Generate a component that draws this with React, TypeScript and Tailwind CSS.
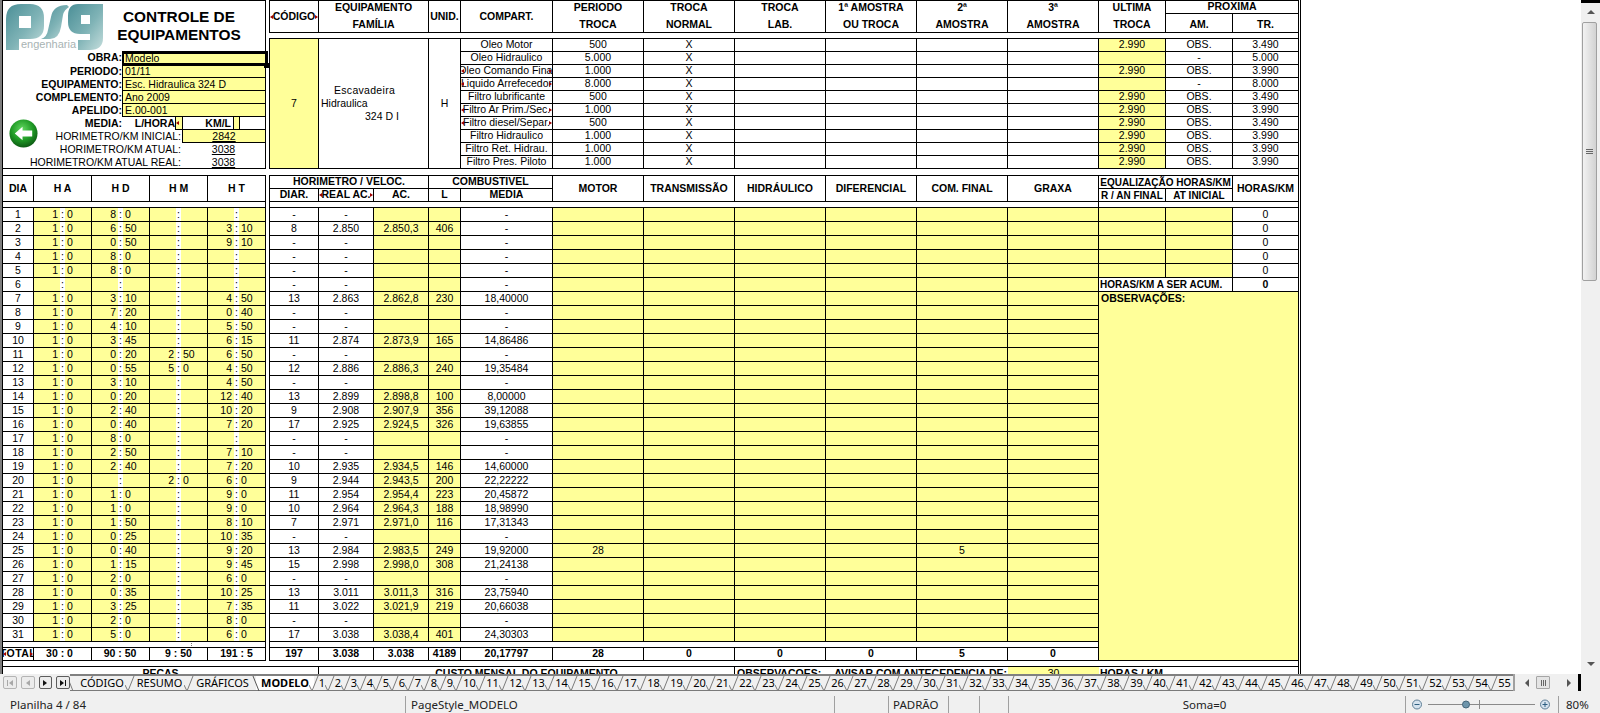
import type { ReactNode } from 'react';

const YELLOW = 'bg-[#ffff99]';
const CELL = 'relative flex items-center justify-center overflow-hidden whitespace-nowrap border-r border-b border-black';

// hd|hm|ht|diar|real|ac|l|media, one line per day
const DAYS = [
  '8:0||||||| ',
  '6:50||3:10|8|2.850|2.850,3|406|',
  '0:50||9:10|||||',
  '8:0|||||||',
  '8:0|||||||',
  '|||||||',
  '3:10||4:50|13|2.863|2.862,8|230|18,40000',
  '7:20||0:40|||||',
  '4:10||5:50|||||',
  '3:45||6:15|11|2.874|2.873,9|165|14,86486',
  '0:20|2:50|6:50|||||',
  '0:55|5:0|4:50|12|2.886|2.886,3|240|19,35484',
  '3:10||4:50|||||',
  '0:20||12:40|13|2.899|2.898,8|100|8,00000',
  '2:40||10:20|9|2.908|2.907,9|356|39,12088',
  '0:40||7:20|17|2.925|2.924,5|326|19,63855',
  '8:0|||||||',
  '2:50||7:10|||||',
  '2:40||7:20|10|2.935|2.934,5|146|14,60000',
  '|2:0|6:0|9|2.944|2.943,5|200|22,22222',
  '1:0||9:0|11|2.954|2.954,4|223|20,45872',
  '1:0||9:0|10|2.964|2.964,3|188|18,98990',
  '1:50||8:10|7|2.971|2.971,0|116|17,31343',
  '0:25||10:35|||||',
  '0:40||9:20|13|2.984|2.983,5|249|19,92000',
  '1:15||9:45|15|2.998|2.998,0|308|21,24138',
  '2:0||6:0|||||',
  '0:35||10:25|13|3.011|3.011,3|316|23,75940',
  '3:25||7:35|11|3.022|3.021,9|219|20,66038',
  '2:0||8:0|||||',
  '5:0||6:0|17|3.038|3.038,4|401|24,30303',
].map((line) => line.split('|').map((part) => part.trim()));

const PARTS = [
  { name: 'Oleo Motor', period: '500', last: '2.990', am: 'OBS.', tr: '3.490' },
  { name: 'Oleo Hidraulico', period: '5.000', last: '', am: '-', tr: '5.000' },
  { name: 'Oleo Comando Final', clip: true, period: '1.000', last: '2.990', am: 'OBS.', tr: '3.990' },
  { name: 'Liquido Arrefecedor', clip: true, period: '8.000', last: '', am: '-', tr: '8.000' },
  { name: 'Filtro lubrificante', period: '500', last: '2.990', am: 'OBS.', tr: '3.490' },
  { name: 'Filtro Ar Prim./Sec.', clip: true, period: '1.000', last: '2.990', am: 'OBS.', tr: '3.990' },
  { name: 'Filtro diesel/Separ.', clip: true, period: '500', last: '2.990', am: 'OBS.', tr: '3.490' },
  { name: 'Filtro Hidraulico', period: '1.000', last: '2.990', am: 'OBS.', tr: '3.990' },
  { name: 'Filtro Ret. Hidrau.', period: '1.000', last: '2.990', am: 'OBS.', tr: '3.990' },
  { name: 'Filtro Pres. Piloto', period: '1.000', last: '2.990', am: 'OBS.', tr: '3.990' },
];

const FIELDS = [
  ['OBRA:', 'Modelo'],
  ['PERIODO:', '01/11'],
  ['EQUIPAMENTO:', 'Esc. Hidraulica 324 D'],
  ['COMPLEMENTO:', 'Ano 2009'],
  ['APELIDO:', 'E.00-001'],
];

const FIRST_TABS = [
  { label: 'CÓDIGO', width: 'w-[60px] pl-[4px]' },
  { label: 'RESUMO', width: 'w-[59px]' },
  { label: 'GRÁFICOS', width: 'w-[67px]' },
  { label: 'MODELO', width: 'w-[58px]', active: true },
];

function Cell({ children, className = '', clip = false }: { children?: ReactNode; className?: string; clip?: boolean }) {
  return (
    <div className={`${CELL} ${className}`}>
      {children}
      {clip && <ClipMarks />}
    </div>
  );
}

function ClipMarks() {
  return (
    <>
      <span className="absolute left-0 top-1/2 -translate-y-1/2 border-y-[2px] border-r-[3px] border-y-transparent border-r-[#a00000]" />
      <span className="absolute right-0 top-1/2 -translate-y-1/2 border-y-[2px] border-l-[3px] border-y-transparent border-l-[#a00000]" />
    </>
  );
}

function TwoLine({ top, bottom, className = '' }: { top: string; bottom: string; className?: string }) {
  return (
    <div className={`flex flex-col border-r border-b border-black font-bold ${className}`}>
      <div className="flex h-[13px] items-center justify-center">{top}</div>
      <div className="flex flex-1 items-center justify-center pt-[3px]">{bottom}</div>
    </div>
  );
}

function TimeCell({ value }: { value: string }) {
  const [hour, minute] = value.split(':');
  return (
    <div className={`flex border-r border-b border-black ${YELLOW}`}>
      <span className="flex-1 pr-[2px] text-right">{hour}</span>
      <span className="w-[5px] bg-white text-center">:</span>
      <span className="flex-1 pl-[2px]">{minute}</span>
    </div>
  );
}

function Logo() {
  return (
    <div className="relative ml-[3px] mt-[3px] h-[46px] w-[97px] shrink-0">
      <svg width="97" height="46" viewBox="0 0 97 46">
        <defs>
          <linearGradient id="psg" x1="0" y1="0" x2="1" y2="1">
            <stop offset="0" stopColor="#4b8f97" />
            <stop offset="0.55" stopColor="#7fb3b6" />
            <stop offset="1" stopColor="#c4dddc" />
          </linearGradient>
        </defs>
        <path fillRule="evenodd" fill="url(#psg)" d="M0 46V15Q0 0 15 0H24Q38 0 38 14V22Q38 35 24 35H13V46ZM13 12V24H25V12Z" />
        <path fill="url(#psg)" d="M61 1Q47 1 45 13L42 26Q41 33 35 35H44Q53 35 55 23L57 11Q58 6 63 3Z" />
        <path fillRule="evenodd" fill="url(#psg)" d="M72 0H97V34Q97 46 84 46H72V36H84V30H74Q62 30 62 18V12Q62 0 72 0ZM75 11V20H84V11Z" />
      </svg>
      <span className="absolute left-[15px] top-[34px] text-[11px] leading-[13px] text-[#a8b3b3]">engenharia</span>
    </div>
  );
}

function BackArrow() {
  return (
    <svg className="absolute left-[6px] top-[118px]" width="29" height="29" viewBox="0 0 30 30">
      <defs>
        <radialGradient id="ball" cx="0.45" cy="0.35" r="0.7">
          <stop offset="0" stopColor="#62d860" />
          <stop offset="0.55" stopColor="#1f9a25" />
          <stop offset="1" stopColor="#0a4f10" />
        </radialGradient>
      </defs>
      <circle cx="15" cy="15" r="14.5" fill="url(#ball)" />
      <path fill="#ffffff" d="M6 15L14 8V12H24V18H14V22Z" />
    </svg>
  );
}

function InfoBlock() {
  return (
    <div className="relative h-[169px] w-[263px] shrink-0 border-t border-r border-b border-black">
      <div className="flex h-[50px]">
        <Logo />
        <div className="flex-1 pr-[10px] pt-[7px] text-center text-[15.4px] font-bold leading-[18px]">
          CONTROLE DE
          <br />
          EQUIPAMENTOS
        </div>
      </div>
      {FIELDS.map(([label, value], i) => (
        <div key={label} className={i === 0 ? 'flex h-[14px]' : 'flex h-[13px]'}>
          <div className="w-[119px] text-right font-bold leading-[13px]">{label}</div>
          <div className={`flex-1 border-l border-b border-black pl-[2px] leading-[12px] ${YELLOW} ${i === 0 ? 'border-t' : ''}`}>{value}</div>
        </div>
      ))}
      <div className="flex h-[13px] leading-[13px]">
        <div className="w-[119px] text-right font-bold">MEDIA:</div>
        <div className="w-[53px] text-right font-bold">L/HORA</div>
        <div className={`relative w-[7px] border-l border-b border-black ${YELLOW}`}>
          <span className="absolute left-0 top-[4px] border-y-[2px] border-r-[3px] border-y-transparent border-r-[#a00000]" />
        </div>
        <div className="w-[51px] border-l border-b border-black pr-[2px] text-right font-bold">KM/L</div>
        <div className={`w-[6px] border-l border-b border-black ${YELLOW}`} />
        <div className="flex-1 border-l border-b border-black" />
      </div>
      <div className="flex h-[13px] leading-[12px]">
        <div className="w-[179px] pr-px text-right">HORIMETRO/KM INICIAL:</div>
        <div className={`flex-1 border-l border-b border-black text-center underline ${YELLOW}`}>2842</div>
      </div>
      <div className="flex h-[13px] leading-[13px]">
        <div className="w-[179px] pr-px text-right">HORIMETRO/KM ATUAL:</div>
        <div className="flex-1 text-center underline">3038</div>
      </div>
      <div className="flex h-[12px] leading-[12px]">
        <div className="w-[179px] pr-px text-right">HORIMETRO/KM ATUAL REAL:</div>
        <div className="flex-1 text-center underline">3038</div>
      </div>
      <BackArrow />
      <div className="absolute left-[119px] top-[50px] h-[15px] w-[146px] border-[3px] border-l-2 border-black" />
      <div className="absolute left-[261px] top-[62px] h-[5px] w-[5px] bg-black" />
    </div>
  );
}

function PartsBlock() {
  return (
    <div className="w-[1030px]">
      <div className="grid grid-cols-[49px_55px_55px_32px_92px_91px_91px_91px_91px_91px_91px_67px_67px_66px] grid-rows-[13px_19px] border-l border-t border-black font-bold">
        <Cell className="row-span-2" clip>CÓDIGO</Cell>
        <TwoLine className="col-span-2 row-span-2" top="EQUIPAMENTO" bottom="FAMÍLIA" />
        <Cell className="row-span-2">UNID.</Cell>
        <Cell className="row-span-2">COMPART.</Cell>
        <TwoLine className="row-span-2" top="PERIODO" bottom="TROCA" />
        <TwoLine className="row-span-2" top="TROCA" bottom="NORMAL" />
        <TwoLine className="row-span-2" top="TROCA" bottom="LAB." />
        <TwoLine className="row-span-2" top="1ª AMOSTRA" bottom="OU TROCA" />
        <TwoLine className="row-span-2" top="2ª" bottom="AMOSTRA" />
        <TwoLine className="row-span-2" top="3ª" bottom="AMOSTRA" />
        <TwoLine className="row-span-2" top="ULTIMA" bottom="TROCA" />
        <Cell className="col-span-2">PROXIMA</Cell>
        <Cell className="pt-[3px]">AM.</Cell>
        <Cell className="pt-[3px]">TR.</Cell>
      </div>
      <div className="h-[5px] border-r border-black" />
      <div className="grid grid-cols-[49px_55px_55px_32px_92px_91px_91px_91px_91px_91px_91px_67px_67px_66px] grid-rows-[repeat(10,13px)] border-l border-t border-black">
        <Cell className={`row-span-10 ${YELLOW}`}>7</Cell>
        <div className="col-span-2 row-span-10 flex flex-col justify-center border-r border-b border-black leading-[13px]">
          <span className="pl-[15px] tracking-[0.3px]">Escavadeira</span>
          <span className="pl-[2px]">Hidraulica</span>
          <span className="pl-[46px]">324 D I</span>
        </div>
        <Cell className="row-span-10">H</Cell>
        {PARTS.map((part) => (
          <div key={part.name} className="contents">
            <Cell clip={part.clip}>{part.name}</Cell>
            <Cell>{part.period}</Cell>
            <Cell>X</Cell>
            <Cell />
            <Cell />
            <Cell />
            <Cell />
            <Cell className={YELLOW}>{part.last}</Cell>
            <Cell>{part.am}</Cell>
            <Cell>{part.tr}</Cell>
          </div>
        ))}
      </div>
    </div>
  );
}

function DayLog() {
  return (
    <div className="h-[486px] w-[263px] shrink-0">
      <div className="grid h-[27px] grid-cols-[31px_58px_58px_58px_58px] border-t border-black font-bold">
        <Cell>DIA</Cell>
        <Cell>H A</Cell>
        <Cell>H D</Cell>
        <Cell>H M</Cell>
        <Cell>H T</Cell>
      </div>
      <div className="h-[5px] border-r border-black" />
      <div className="grid grid-cols-[31px_58px_58px_58px_58px] grid-rows-[repeat(31,14px)] border-t border-black leading-[13px]">
        {DAYS.map((d, i) => (
          <div key={i} className="contents">
            <Cell>{i + 1}</Cell>
            <TimeCell value={i === 5 ? ':' : '1:0'} />
            <TimeCell value={d[0] || ':'} />
            <TimeCell value={d[1] || ':'} />
            <TimeCell value={d[2] || ':'} />
          </div>
        ))}
      </div>
      <div className="relative h-[5px] border-r border-black">
        <span className="absolute left-[188px] top-[1px] h-px w-px bg-[#777777]" />
        <span className="absolute left-[188px] top-[3px] h-px w-px bg-[#777777]" />
      </div>
      <div className="grid h-[14px] grid-cols-[31px_58px_58px_58px_58px] border-t border-black font-bold">
        <Cell className="tracking-[0.5px]" clip>TOTAL</Cell>
        <Cell className="pr-[6px]">30 : 0</Cell>
        <Cell className="pr-[1px]">90 : 50</Cell>
        <Cell>9 : 50</Cell>
        <Cell>191 : 5</Cell>
      </div>
    </div>
  );
}

function ReadingsTable() {
  return (
    <div className="w-[830px] border-l border-black">
      <div className="grid grid-cols-[49px_55px_55px_32px_92px_91px_91px_91px_91px_91px_91px] grid-rows-[13px_13px] border-t border-black font-bold">
        <Cell className="col-span-3">HORIMETRO / VELOC.</Cell>
        <Cell className="col-span-2">COMBUSTIVEL</Cell>
        <Cell className="row-span-2">MOTOR</Cell>
        <Cell className="row-span-2">TRANSMISSÃO</Cell>
        <Cell className="row-span-2">HIDRÁULICO</Cell>
        <Cell className="row-span-2">DIFERENCIAL</Cell>
        <Cell className="row-span-2">COM. FINAL</Cell>
        <Cell className="row-span-2">GRAXA</Cell>
        <Cell>DIAR.</Cell>
        <Cell clip>REAL AC.</Cell>
        <Cell>AC.</Cell>
        <Cell>L</Cell>
        <Cell>MEDIA</Cell>
      </div>
      <div className="h-[5px] border-r border-black" />
      <div className="grid grid-cols-[49px_55px_55px_32px_92px_91px_91px_91px_91px_91px_91px] grid-rows-[repeat(31,14px)] border-t border-black leading-[13px]">
        {DAYS.map((d, i) => (
          <div key={i} className="contents">
            <Cell>{d[3] || '-'}</Cell>
            <Cell>{d[4] || '-'}</Cell>
            <Cell className={YELLOW}>{d[5]}</Cell>
            <Cell className={YELLOW}>{d[6]}</Cell>
            <Cell>{d[7] || '-'}</Cell>
            <Cell className={YELLOW}>{i === 24 ? '28' : ''}</Cell>
            <Cell className={YELLOW} />
            <Cell className={YELLOW} />
            <Cell className={YELLOW} />
            <Cell className={YELLOW}>{i === 24 ? '5' : ''}</Cell>
            <Cell className={YELLOW} />
          </div>
        ))}
      </div>
      <div className="h-[5px] border-r border-black" />
      <div className="grid h-[14px] grid-cols-[49px_55px_55px_32px_92px_91px_91px_91px_91px_91px_91px] border-t border-black font-bold">
        <Cell>197</Cell>
        <Cell>3.038</Cell>
        <Cell>3.038</Cell>
        <Cell>4189</Cell>
        <Cell>20,17797</Cell>
        <Cell>28</Cell>
        <Cell>0</Cell>
        <Cell>0</Cell>
        <Cell>0</Cell>
        <Cell>5</Cell>
        <Cell>0</Cell>
      </div>
    </div>
  );
}

function SidePanel() {
  return (
    <div className="flex w-[200px] flex-col">
      <div className="grid grid-cols-[67px_67px_66px] grid-rows-[13px_13px] border-t border-black font-bold">
        <Cell className="col-span-2 text-[10px]">EQUALIZAÇÃO HORAS/KM</Cell>
        <Cell className="row-span-2">HORAS/KM</Cell>
        <Cell className="text-[10px]">R / AN FINAL</Cell>
        <Cell className="text-[10px]">AT INICIAL</Cell>
      </div>
      <div className="h-[5px] border-r border-black" />
      <div className="grid grid-cols-[67px_67px_66px] grid-rows-[repeat(6,14px)] border-t border-black leading-[13px]">
        {[0, 1, 2, 3, 4].map((n) => (
          <div key={n} className="contents">
            <Cell className={YELLOW} />
            <Cell className={YELLOW} />
            <Cell>0</Cell>
          </div>
        ))}
        <Cell className="col-span-2 justify-start pl-[1px] text-[10px] font-bold">HORAS/KM A SER ACUM.</Cell>
        <Cell className="font-bold">0</Cell>
      </div>
      <div className={`flex-1 border-r border-b border-black pl-[2px] font-bold leading-[13px] ${YELLOW}`}>OBSERVAÇÕES:</div>
    </div>
  );
}

function FooterRow() {
  return (
    <div className="flex border-t border-black font-bold leading-[12px]">
      <div className="w-[316px] border-r border-black text-center">PECAS</div>
      <div className="w-[416px] border-r border-black text-center">CUSTO MENSAL DO EQUIPAMENTO</div>
      <div className="flex w-[273px] justify-between pl-[2px] pr-px">
        <span>OBSERVACOES:</span>
        <span>AVISAR COM ANTECEDENCIA DE:</span>
      </div>
      <div className={`w-[91px] text-center font-normal ${YELLOW}`}>30</div>
      <div className="w-[200px] border-r border-black pl-[1px]">HORAS / KM</div>
    </div>
  );
}

function Sheet() {
  return (
    <div className="h-[674px] w-[1301px] shrink-0 overflow-hidden border-l-2 border-r border-l-[#7d7d7d] border-r-black pr-px font-['Liberation_Sans',sans-serif] text-[10.5px] text-black">
      <div className="h-full border-l border-black">
        <div className="flex">
          <InfoBlock />
          <div className="w-[3px]" />
          <PartsBlock />
        </div>
        <div className="h-[6px] w-[1296px] border-r border-black" />
        <div className="flex">
          <DayLog />
          <div className="w-[3px]" />
          <ReadingsTable />
          <SidePanel />
        </div>
        <div className="h-[5px] w-[1296px] border-r border-black" />
        <FooterRow />
      </div>
    </div>
  );
}

function Slash({ back = false, dark = false }: { back?: boolean; dark?: boolean }) {
  const stroke = dark ? '#555555' : '#7a7a7a';
  return (
    <svg className="absolute -left-[5px] top-0 z-10" width="10" height="16" viewBox="0 0 10 16" fill="none">
      {back ? (
        <path d="M2 0L8 15" stroke={stroke} />
      ) : (
        <path d="M0 9L3 15M3 15L9 0" stroke={stroke} />
      )}
    </svg>
  );
}

function NavButton({ kind, enabled }: { kind: 'first' | 'prev' | 'next' | 'last'; enabled: boolean }) {
  const fill = enabled ? '#111111' : '#a8a8a8';
  return (
    <div className={`flex h-[13px] w-[14px] items-center justify-center rounded-[2px] border ${enabled ? 'border-[#5c5c5c]' : 'border-[#b4b4b4]'} bg-[#ececec]`}>
      <svg width="8" height="8" viewBox="0 0 8 8" fill={fill}>
        {kind === 'first' && <path d="M1 1H2V7H1ZM7 1V7L3 4Z" />}
        {kind === 'prev' && <path d="M6 1V7L2 4Z" />}
        {kind === 'next' && <path d="M2 1V7L6 4Z" />}
        {kind === 'last' && <path d="M6 1H7V7H6ZM1 1V7L5 4Z" />}
      </svg>
    </div>
  );
}

function TabBar() {
  const numbers = Array.from({ length: 55 }, (_, i) => String(i + 1));
  return (
    <div className="flex h-[17px] bg-[#f0f0f0] font-['Noto_Sans',sans-serif] text-[11px] text-black">
      <div className="flex w-[70px] shrink-0 items-center gap-[4px] pl-[3px]">
        <NavButton kind="first" enabled={false} />
        <NavButton kind="prev" enabled={false} />
        <NavButton kind="next" enabled />
        <NavButton kind="last" enabled />
      </div>
      <div className="flex w-[1443px] shrink-0 overflow-hidden border-t-2 border-[#808080]">
        {FIRST_TABS.map((tab, i) => (
          <div key={tab.label} className={`relative h-[15px] shrink-0 border-b border-[#7a7a7a] text-center leading-[13px] ${tab.width} ${tab.active ? 'bg-white font-bold' : ''}`}>
            <Slash back={i === 0 || tab.active} dark={tab.active} />
            {tab.label}
          </div>
        ))}
        {numbers.map((n) => (
          <div key={n} className={`relative h-[15px] shrink-0 border-b border-[#7a7a7a] text-center leading-[13px] ${n.length > 1 ? 'w-[23px]' : 'w-[16px]'}`}>
            <Slash />
            {n}
          </div>
        ))}
      </div>
      <div className="flex w-[65px] shrink-0 items-center border-l-2 border-[#a0a0a0] pl-[10px]">
        <svg width="5" height="8" viewBox="0 0 5 8" fill="#555555">
          <path d="M4 0V8L0 4Z" />
        </svg>
        <div className="ml-[6px] flex h-[13px] w-[14px] items-center justify-center gap-px rounded-[1px] border border-[#a5a5a5] bg-[#e4e4e4]">
          <span className="h-[6px] w-px bg-[#666666]" />
          <span className="h-[6px] w-px bg-[#666666]" />
          <span className="h-[6px] w-px bg-[#666666]" />
        </div>
        <svg className="ml-[17px]" width="5" height="8" viewBox="0 0 5 8" fill="#555555">
          <path d="M0 0V8L4 4Z" />
        </svg>
      </div>
      <div className="w-[3px] shrink-0 bg-black" />
    </div>
  );
}

function VerticalScroll() {
  return (
    <div className="flex h-[691px] w-[19px] shrink-0 flex-col bg-[#f0f0f0]">
      <div className="h-[3px] bg-black" />
      <div className="flex h-[18px] items-center justify-center">
        <svg width="8" height="5" viewBox="0 0 8 5" fill="#555555">
          <path d="M0 4H8L4 0Z" />
        </svg>
      </div>
      <div className="ml-[1px] mt-px flex h-[259px] w-[15px] flex-col items-center justify-center gap-px rounded-[2px] border border-[#a0a0a0] bg-gradient-to-r from-[#f2f2f2] to-[#d2d2d2]">
        <span className="h-px w-[7px] bg-[#666666]" />
        <span className="h-px w-[7px] bg-[#666666]" />
        <span className="h-px w-[7px] bg-[#666666]" />
      </div>
      <div className="flex-1" />
      <div className="mb-[22px] flex h-[10px] items-center justify-center">
        <svg width="8" height="5" viewBox="0 0 8 5" fill="#555555">
          <path d="M0 0H8L4 4Z" />
        </svg>
      </div>
    </div>
  );
}

function StatusBar() {
  const sep = 'flex h-[17px] items-center border-l border-[#a0a0a0]';
  return (
    <div className="flex h-[22px] items-end bg-[#f0f0f0] font-['Noto_Sans',sans-serif] text-[11.5px] text-[#222222]">
      <div className="flex h-[17px] w-[405px] items-center pl-[10px]">Planilha 4 / 84</div>
      <div className={`${sep} w-[429px] pl-[5px]`}>PageStyle_MODELO</div>
      <div className={`${sep} w-[54px]`} />
      <div className={`${sep} w-[60px] pl-[4px]`}>PADRÃO</div>
      <div className={`${sep} w-[31px]`} />
      <div className={`${sep} w-[29px]`} />
      <div className={`${sep} w-[397px] justify-center pr-[5px]`}>Soma=0</div>
      <div className={`${sep} w-[153px]`}>
        <svg width="152" height="17" viewBox="0 0 152 17" fill="none">
          <circle cx="11" cy="8.5" r="4.5" fill="#d4e2ee" stroke="#5f7f96" />
          <path d="M8.5 8.5H13.5" stroke="#2f5f80" />
          <path d="M22 8.5H129" stroke="#8a8a8a" />
          <path d="M73.5 4V13" stroke="#8a8a8a" />
          <circle cx="60" cy="8.5" r="3.5" fill="#6e95ab" stroke="#44657a" />
          <circle cx="139" cy="8.5" r="4.5" fill="#d4e2ee" stroke="#5f7f96" />
          <path d="M136.5 8.5H141.5M139 6V11" stroke="#2f5f80" />
        </svg>
      </div>
      <div className={`${sep} w-[42px] pl-[7px]`}>80%</div>
    </div>
  );
}

export default function App() {
  return (
    <div className="h-[713px] w-[1600px] overflow-hidden bg-white">
      <div className="flex h-[691px]">
        <div className="w-[1581px] shrink-0">
          <div className="flex h-[674px]">
            <Sheet />
          </div>
          <TabBar />
        </div>
        <VerticalScroll />
      </div>
      <StatusBar />
    </div>
  );
}
